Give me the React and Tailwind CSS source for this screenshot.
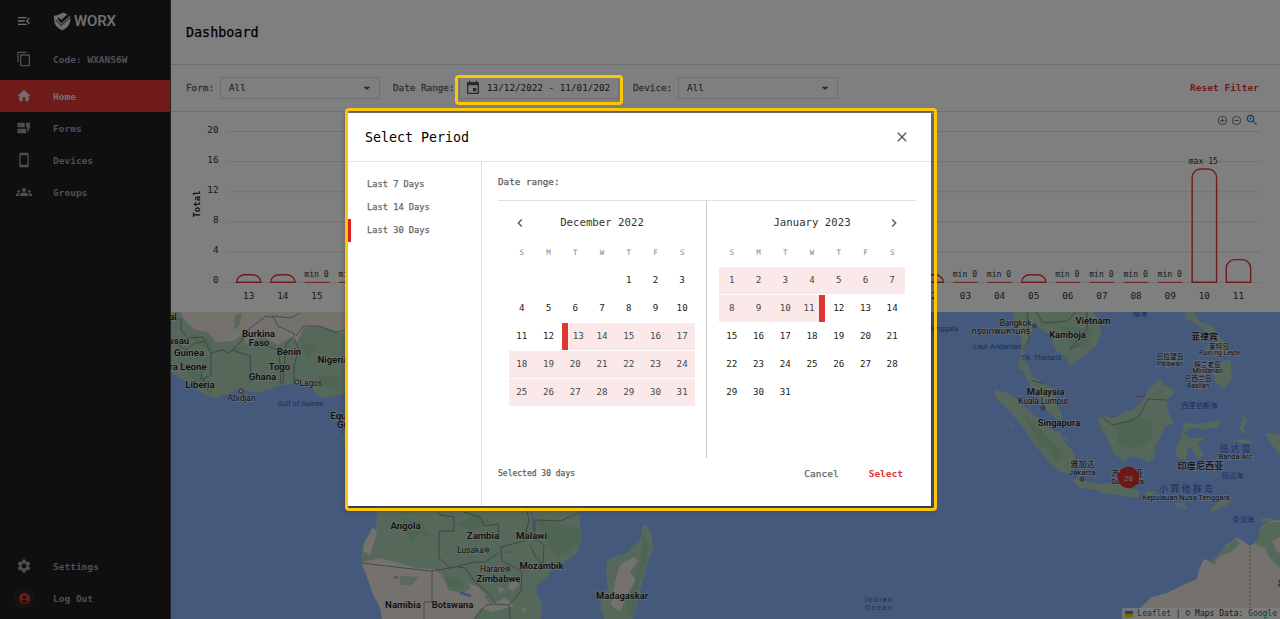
import React from "react";
import {
  MdMenuOpen, MdContentCopy, MdHome, MdDynamicForm, MdStayCurrentPortrait, MdGroups, MdSettings,
  MdAccountCircle, MdEvent, MdArrowDropDown, MdChevronLeft, MdChevronRight, MdClose,
  MdAddCircleOutline, MdRemoveCircleOutline, MdZoomIn,
} from "react-icons/md";

const NAV = [
  { label: "Home", icon: MdHome, active: true },
  { label: "Forms", icon: MdDynamicForm },
  { label: "Devices", icon: MdStayCurrentPortrait },
  { label: "Groups", icon: MdGroups },
];

function NavItem({ label, icon: Icon, active, danger }) {
  return (
    <div className={`flex h-8 shrink-0 items-center text-[9.5px] font-bold ${active ? "bg-[#de3733] text-[#e0e0e0]" : "text-[#9c9ca8]"}`}>
      <span className="flex w-[53px] items-center pl-[13px]">
        <span className={`flex size-[22px] items-center justify-center rounded-full ${danger ? "bg-[#de3733]/10 text-[#de3733]" : ""}`}>
          <Icon className={danger ? "size-[13px]" : "size-4"} />
        </span>
      </span>
      <span className="pt-[2px]">{label}</span>
    </div>
  );
}

function Sidebar() {
  return (
    <aside className="flex w-[171px] shrink-0 flex-col border-r border-[#484848] bg-[#1f1f1f]">
      <div className="flex h-[42px] shrink-0 items-center">
        <MdMenuOpen className="ml-4 size-4 text-[#dddddd]" />
        <svg viewBox="0 0 18 19" className="ml-[21px] h-[19px] w-[18px]">
          <path d="M1 3.8Q6 3.4 10 .6L14.5 2.2L8.2 8L5.6 5.2L4.4 6.4L8.2 11.4L17.3 3.4V8Q17 15 9.2 18.4Q1.4 15 1 8Z" fill="#dddddd" />
          <path d="M2.6 7.6L8 13.6L17.3 5.4" fill="none" stroke="#1f1f1f" strokeWidth="1" />
        </svg>
        <span className="ml-[3px] font-['Roboto',sans-serif] text-[15px] leading-none font-semibold tracking-[-0.15px] text-[#dddddd]">WORX</span>
      </div>
      <div className="mt-px mb-[5px]"><NavItem label="Code: WXANS6W" icon={MdContentCopy} /></div>
      <div className="flex flex-col">{NAV.map((n) => <NavItem key={n.label} {...n} />)}</div>
      <div className="mt-auto mb-[5px] flex flex-col">
        <NavItem label="Settings" icon={MdSettings} />
        <NavItem label="Log Out" icon={MdAccountCircle} danger />
      </div>
    </aside>
  );
}

function SelectBox({ children }) {
  return (
    <div className="flex h-[22px] w-[160px] items-center justify-between border border-[#dedede] pr-[4px] pl-2 text-[#222]">
      <span>{children}</span>
      <MdArrowDropDown className="size-4 text-[#555]" />
    </div>
  );
}

function Filters() {
  return (
    <div className="flex h-[47px] shrink-0 items-center border-b border-[#dddddd] pr-[21px] pl-[15px] text-[9.3px] text-[#2c2c2c]">
      <span className="w-[34px] text-[#666] [-webkit-text-stroke:0.3px_#666]">Form:</span>
      <SelectBox>All</SelectBox>
      <span className="ml-[13px] w-[66px] whitespace-nowrap text-[#666] [-webkit-text-stroke:0.3px_#666]">Date Range:</span>
      <div className="flex h-[22px] w-[160px] items-center gap-[6px] border border-[#dedede] pl-[5px] whitespace-nowrap">
        <MdEvent className="size-4 text-[#555]" />
        13/12/2022 - 11/01/202
      </div>
      <span className="ml-[14px] w-[45px] text-[#666] [-webkit-text-stroke:0.3px_#666]">Device:</span>
      <SelectBox>All</SelectBox>
      <span className="ml-auto text-[9.55px] font-bold text-[#de3733]">Reset Filter</span>
    </div>
  );
}

const DAYS = Array.from({ length: 30 }, (_, i) => String(i < 19 ? 13 + i : i - 18).padStart(2, "0"));
const TOTALS = [1, 1, 0, 0, 1, 0, 0, 0, 0, 0, 0, 0, 0, 0, 0, 0, 0, 0, 0, 0, 1, 0, 0, 1, 0, 0, 0, 0, 15, 3];

function Chart() {
  return (
    <div className="relative h-[200px] shrink-0">
      <svg viewBox="171 112 1109 200" className="block h-[200px] w-[1109px] font-['DejaVu_Sans_Mono',monospace]">
        {[0, 4, 8, 12, 16, 20].map((v) => (
          <g key={v}>
            <line x1="227" x2="1260" y1={282.5 - v * 7.55} y2={282.5 - v * 7.55} stroke="#e4e4e4" />
            <text x="218.5" y={283.3 - v * 7.5} textAnchor="end" fontSize="9.3" fill="#333">{v}</text>
          </g>
        ))}
        <text transform="translate(200 204) rotate(-90)" textAnchor="middle" fontSize="9" fontWeight="700" fill="#222">Total</text>
        {DAYS.map((d, i) => {
          const x = 248.7 + i * 34.13;
          const v = TOTALS[i];
          const h = v * 7.55;
          const r = Math.min(8.5, h);
          return (
            <g key={i}>
              <text x={x} y="299.3" textAnchor="middle" fontSize="9.3" fill="#333">{d}</text>
              {v === 0 ? (
                <>
                  <line x1={x - 12.3} x2={x + 12.3} y1="282.3" y2="282.3" stroke="#de3733" strokeWidth="1" />
                  <text x={x - 0.5} y="277" textAnchor="middle" fontSize="8.1" fill="#333">min 0</text>
                </>
              ) : (
                <path
                  d={`M${x - 12.2} 282.3V${282.3 - h + r}A8.5 ${r} 0 0 1 ${x - 3.7} ${282.3 - h}H${x + 3.7}A8.5 ${r} 0 0 1 ${x + 12.2} ${282.3 - h + r}V282.3Z`}
                  fill="none" stroke="#de3733" strokeWidth="1.4"
                />
              )}
              {v === 15 && <text x={x - 1} y="164" textAnchor="middle" fontSize="8.1" fill="#333">max 15</text>}
            </g>
          );
        })}
      </svg>
      <div className="absolute top-px right-[21px] flex items-center gap-[3px] text-[#6e8192]">
        <MdAddCircleOutline className="size-[11px]" />
        <MdRemoveCircleOutline className="size-[11px]" />
        <MdZoomIn className="size-[14px] text-[#0f8bf0]" />
      </div>
    </div>
  );
}

const LABELS = [
  ["ssau", 179, 343.5, 9.6, 600], ["al", 173, 320, 9.6, 600], ["Guinea", 189, 356, 9.6, 600], ["ra Leone", 188, 370, 9.6, 600], ["Liberia", 200, 387.5, 9.6, 600],
  ["Burkina", 258.5, 336.5, 9.6, 600], ["Faso", 259, 346, 9.6, 600], ["Benin", 289, 355, 9.6, 600], ["Togo", 279.5, 369.5, 9.6, 600],
  ["Ghana", 262.5, 379.5, 9.6, 600], ["Nigeria", 333, 363, 9.6, 600], ["Lagos", 311, 386, 8.4, 400], ["Abidjan", 241.5, 401, 8.4, 400],
  ["Equatorial", 352, 418.5, 9.6, 600], ["Guinea", 352, 428, 9.6, 600],
  ["Angola", 405.5, 529, 9.6, 600], ["Zambia", 483, 538.5, 9.6, 600], ["Malawi", 531.5, 538.5, 9.6, 600], ["Lusaka", 470.5, 552.5, 8.4, 400],
  ["Mozambik", 541.5, 568.5, 9.4, 600], ["Harare", 492.5, 572, 8.4, 400], ["Zimbabwe", 498.5, 582, 9.4, 600], ["Namibia", 403, 607.5, 9.6, 600],
  ["Botswana", 452.5, 608, 9.4, 600], ["Madagaskar", 622, 599, 9.4, 600],
  ["Bangkok", 1015.5, 325.5, 8.2, 400], ["กรุงเทพมหานคร", 1001, 333.5, 9, 400], ["Vietnam", 1093, 324, 9.4, 600], ["Kamboja", 1067.5, 338, 9.2, 600],
  ["Malaysia", 1045.5, 395, 9.4, 600], ["Kuala Lumpur", 1043.5, 404, 8.2, 400], ["Singapura", 1059, 425.5, 9.4, 600],
  ["菲律宾", 1204.5, 340, 9, 500], ["莱特岛", 1219, 348.5, 6.6, 400], ["Pulo ng Leyte", 1219.5, 355, 6.8, 400],
  ["巴拉望岛", 1170, 359, 6.8, 400], ["Palawan", 1170, 366, 6.8, 400], ["棉兰老岛", 1207.5, 366.5, 6.6, 400], ["Mindanao", 1207.5, 373, 6.8, 400],
  ["巴西兰岛", 1198, 381, 6.8, 400], ["Basilan", 1198, 388, 6.8, 400], ["雅加达", 1082.5, 467, 8, 400], ["Jakarta", 1082, 474.5, 8, 400],
  ["苏腊巴亚", 1127.5, 475.5, 8, 400], ["Surabaya", 1127.5, 483.5, 8, 400], ["印度尼西亚", 1200.5, 468.5, 9.2, 500],
  ["Banda Arc", 1235.5, 459, 7.4, 400], ["Kepulauan Nusa Tenggara", 1186, 500, 7.5, 400],
  ["北", 1281, 586, 8, 400],
];
const SEA = [
  ["Gulf of Guinea", 300.5, 405.5, 7.2], ["Benggala", 943, 331, 7.2], ["Laut Andaman", 997.5, 348.5, 7.4], ["Tlk. Thailand", 1041, 360, 7.2],
  ["南海", 1140, 316, 7.2], ["西里伯斯海", 1199.5, 407.5, 7.2], ["班 达 弧", 1235, 452, 8.6], ["班达海", 1232.5, 478, 7.2],
  ["小 巽 他 群 岛", 1186, 491.5, 9], ["帝汶海", 1243, 521.5, 7.2],
];

function WorldMap() {
  return (
    <div className="relative h-[307px] shrink-0">
      <svg viewBox="171 312 1109 307" className="block h-[307px] w-[1109px] font-['Roboto','Noto_Sans_CJK_SC','Noto_Sans_Thai',sans-serif]">
        <rect x="171" y="312" width="1109" height="307" fill="#8bb3f8" />
        <g fill="#abd0b5">
          <path d="M171 312H560L590 500L579 512L581 541L577 553L570 559L556 565L547 577L537 585L536 592L542 601L541 619H382L380 608L372 592L368 574L361 563L362 548L370 536L376 528L377 511L370 490L356 463L342 440L346 430L345 393L330 397L320 398L315 392L311 387L305 383L297 384L281 385L270 389L255 393L243 389L235 391L215 398L200 392L190 384L180 378L171 372Z" />
          <path d="M646 524L651 534L652 544L654 552L650 555L645 572L638 600L633 619H604L600 606L602 598L608 588L606 573L607 561L615 556L627 553L634 545L641 538L642 527Z" />
          <path d="M1013 312H1092L1099 319L1101 333L1097 345L1083 357L1070 366L1067 358L1056 350L1050 335L1040 328L1034 326L1027 343L1023 358L1028 365L1032 376L1042 383L1052 388L1056 400L1063 418L1057 420L1045 409L1037 395L1030 386L1024 372L1018 368L1021 355L1021 338L1015 322Z" />
          <path d="M994 389L1001 391L1009 393L1022 404L1030 412L1042 421L1050 428L1061 434L1066 444L1074 452L1075 462L1069 474L1058 471L1045 457L1034 444L1024 429L1010 411L997 399Z" />
          <path d="M1072 480L1080 477L1088 482L1097 484L1105 483L1118 484L1128 487L1139 491L1138 498L1123 496L1105 493L1091 489L1080 488Z" />
          <path d="M1098 419L1103 416L1115 418L1125 411L1133 410L1144 399L1149 388L1160 379L1164 385L1172 389L1175 393L1166 400L1168 411L1173 423L1164 427L1161 438L1155 446L1154 459L1144 460L1133 456L1123 461L1113 453L1109 440L1101 429Z" />
          <path d="M1184 423L1198 424L1213 422L1221 419L1218 427L1203 429L1190 427L1184 434L1191 439L1207 437L1198 443L1203 455L1198 459L1189 445L1186 459L1178 459L1175 450L1181 438Z" />
          <path d="M1185 312H1194L1200 322L1213 326L1216 333L1206 332L1195 323L1185 318ZM1198 334L1204 335L1202 345ZM1216 333L1226 343L1230 355L1223 356L1217 345ZM1208 342L1212 358L1206 352ZM1212 373L1222 361L1230 360L1232 378L1224 389L1216 382ZM1165 371L1178 349L1172 364Z" />
          <path d="M1243 414L1248 421L1243 427L1247 434L1240 430ZM1264 433L1277 434L1280 436V455L1272 445ZM1235 440L1247 439L1254 444L1241 443ZM1174 503L1184 503L1188 509L1178 508ZM1210 509L1218 502L1234 496L1227 505L1213 512ZM1145 492L1154 491L1155 495L1146 495ZM1260 519L1269 518L1278 521L1262 522ZM1143 458L1153 458L1147 463ZM1064 436L1069 438L1067 442ZM1008 422L1014 427L1012 428Z" />
        </g>
        <g fill="#ebe4dc">
          <path d="M180 312H360V330L341 333L318 326L303 328L297 343L291 337L278 345L262 336L249 342L236 349L231 341L216 342L208 332L195 330L186 322Z" />
          <path d="M361 563L379 558L399 563L415 568L434 569L445 577L448 590L463 593L476 585L490 604L505 598L514 606L492 612L481 608L474 619H382L380 608L372 592L366 574Z" />
          <path d="M373 527L377 533L373 545L370 555L363 551L364 543Z" />
          <path d="M498 586L505 590L499 593ZM468 583L478 587L487 596L473 591ZM514 579L519 585L513 591L508 587ZM523 606L527 610L523 613Z" />
          <path d="M620 565L633 557L638 560L630 572L636 580L627 595L620 612L611 605L615 582ZM1280 520L1270 521L1262 526L1257 542L1250 546L1243 541L1237 538L1226 545L1220 555L1212 562L1204 559L1199 570L1197 579L1181 586L1167 593L1152 597L1139 609L1136 619H1280Z" />
        </g>
        <path d="M1209 562L1217 556L1223 548L1236 539L1240 543L1233 551L1219 557L1214 565ZM1256 544L1260 529L1268 522L1280 522V537L1272 541L1276 550L1280 554V568L1269 557L1265 548Z" fill="#abd0b5" />
        <g fill="#94c6a1" opacity="0.6">
          <path d="M235 315L242 314L240 324L234 331ZM230 343L246 332L245 348L235 350ZM190 335L208 338L214 352L198 344ZM176 360L194 368L209 383L214 396L199 386ZM302 344L318 346L306 358ZM317 375L338 377L339 391L323 386ZM402 517L420 521L432 537L417 534L413 545L407 534ZM455 525L477 514L492 523L473 530ZM534 519L579 528L580 544L557 557L548 544ZM400 576L419 577L411 585L400 585ZM440 575L460 579L465 588L449 586ZM644 535L649 548L638 590L633 619L625 611L635 580L641 558ZM1117 425L1135 417L1152 420L1151 439L1136 450L1117 443ZM1152 395L1162 388L1160 397ZM1020 410L1041 430L1064 453L1059 462L1038 442ZM1060 326L1095 330L1085 348L1070 345Z" />
        </g>
        <g fill="none" stroke="#747e79" strokeWidth="0.8">
          <path d="M171 318L181 319L181 330L187 338L203 337L211 353V375L203 379L208 390M211 353L222 350L229 353L238 345L249 329L266 316L274 318L278 326L295 334L286 345L283 384M232 350L250 356L251 382M266 346L279 350L281 384M294 338L299 350L294 365V384M296 336L303 326L319 326L335 332L348 330M272 316L291 318L300 313" />
          <path d="M171 340L186 350L193 344L205 341M192 365L202 369L201 380M440 507V515L454 517V531H439V558L450 568L430 571L361 563M432 571V602H424V619M458 567L465 568L476 583L487 592L496 604L509 605L521 591L522 571L502 561L501 547L524 541L529 520L526 507M509 605L510 619M496 604L486 605L474 619M450 568L460 566L474 562L485 562L500 552M464 512L480 517L484 526L498 524L499 539L490 535M530 545L535 556L543 565L544 545L534 538L535 520L560 521L579 513" />
          <path d="M1027 312L1029 340L1023 350M1036 312L1043 323L1068 321L1075 312M1087 312V329L1070 349L1079 345M1031 380L1044 384M1102 417L1112 425L1130 421L1140 415L1148 399L1166 400M1136 397L1145 396" />
          <path d="M1250 547V619" strokeDasharray="2 2" />
        </g>
        <path d="M531 507L536 530L533 530ZM484 562L491 558L489 561ZM392 577L398 576L397 579ZM505 552L517 551L505 553ZM460 591L472 595L470 597L460 594Z" fill="#7ba5ee" />
        {SEA.map(([t, x, y, s]) => (
          <text key={t} x={x} y={y} fontSize={s} textAnchor="middle" fill="#2c5fb3">{t}</text>
        ))}
        {LABELS.map(([t, x, y, s, w], i) => (
          <text key={i} x={x} y={y} fontSize={s} fontWeight={w} textAnchor="middle" fill="#222222" stroke="#f4f4f4" strokeOpacity="0.5" strokeWidth="1.6" paintOrder="stroke">{t}</text>
        ))}
        <g fill="#e8e8e8" stroke="#333" strokeWidth="0.8">
          {[[241, 391], [297, 382], [487, 550], [508, 569], [1034.5, 326], [1043, 408], [1082, 479]].map(([x, y]) => (
            <g key={x}><circle cx={x} cy={y} r="2" />{x > 300 && <circle cx={x} cy={y} r="0.6" />}</g>
          ))}
        </g>
        <text x="879" y="601.5" fontSize="8" textAnchor="middle" fill="#2c5fb3" letterSpacing="1.1">Indian</text>
        <text x="879" y="610" fontSize="8" textAnchor="middle" fill="#2c5fb3" letterSpacing="1.1">Ocean</text>
        <circle cx="1128.5" cy="477.5" r="10.7" fill="#d9302c" />
        <text x="1128.5" y="480.5" fontSize="8" textAnchor="middle" fill="#f0d8d8" className="font-['Liberation_Sans',sans-serif]">28</text>
      </svg>
      <div className="absolute right-0 bottom-0 flex h-[11px] items-center gap-[4px] bg-white/75 pr-[3px] pl-[3px] leading-none whitespace-pre text-[#333]">
        <span className="flex h-[6px] w-2 flex-col"><span className="h-[3px] bg-[#4c7be1]" /><span className="h-[3px] bg-[#ffd500]" /></span>
        <span className="text-[8px]"><span className="text-[#0078a8]">Leaflet</span> | © Maps Data: <span className="text-[#0078a8]">Google</span></span>
      </div>
    </div>
  );
}

function Calendar({ title, offset, count, rangeFrom, rangeTo, start, end, prev, next }) {
  const cells = [...Array(offset).fill(null), ...Array.from({ length: count }, (_, i) => i + 1)];
  return (
    <div className={`shrink-0 ${next ? "w-[209px] pr-[10.5px] pl-[11.5px]" : "w-[208px] pr-[10.5px] pl-[10.5px]"}`}>
      <div className="flex h-[44px] items-center justify-between text-[10.7px] text-[#333]">
        <span className="flex w-[23px] justify-center">{prev && <MdChevronLeft className="size-4 text-[#555]" />}</span>
        <span className="whitespace-nowrap">{title}</span>
        <span className="flex w-[23px] justify-center">{next && <MdChevronRight className="size-4 text-[#555]" />}</span>
      </div>
      <div className="grid h-[15px] grid-cols-7 items-center text-center text-[7.5px] text-[#888]">
        {["S", "M", "T", "W", "T", "F", "S"].map((d, i) => <span key={i}>{d}</span>)}
      </div>
      <div className="mt-[7px] grid grid-cols-7 gap-y-px text-[9.2px] text-[#222]">
        {cells.map((d, i) => {
          const inRange = d !== null && d >= rangeFrom && d <= rangeTo;
          return (
            <div key={i} className={`flex h-[27px] items-center ${inRange ? "bg-[#fbe9e9] text-[#484848]" : ""}`}>
              {d !== null && d === start && <span className="h-full w-[6px] bg-[#de3733]" />}
              <span className="flex-1 pb-[2px] text-center">{d}</span>
              {d !== null && d === end && <span className="h-full w-[6px] bg-[#de3733]" />}
            </div>
          );
        })}
      </div>
    </div>
  );
}

function PeriodDialog() {
  return (
    <div className="absolute top-[113px] left-[348px] flex h-[393px] w-[583px] flex-col bg-white shadow-[0_2px_6px_2px_rgba(0,0,0,0.35)]">
      <div className="flex h-[49px] shrink-0 items-center justify-between border-b border-[#e4e4e4] pr-[21px] pl-[17px]">
        <h2 className="pt-[2px] text-[13.3px] text-black">Select Period</h2>
        <MdClose className="size-[16px] text-[#555]" />
      </div>
      <div className="flex min-h-0 flex-1">
        <div className="flex w-[134px] shrink-0 flex-col border-r border-[#e0e0e0] pt-[11px] text-[8.7px] text-[#666] [-webkit-text-stroke:0.25px_#666]">
          <div className="flex h-[23px] items-center pl-[19px]">Last 7 Days</div>
          <div className="flex h-[23px] items-center pt-px pl-[19px]">Last 14 Days</div>
          <div className="flex h-[23px] items-center border-l-[3px] border-[#e02020] pt-px pl-4">Last 30 Days</div>
        </div>
        <div className="flex flex-1 flex-col pl-4">
          <div className="flex h-[38px] shrink-0 items-center pt-[2px] text-[9.3px] text-[#606060] [-webkit-text-stroke:0.25px_#606060]">Date range:</div>
          <div className="flex h-[258px] w-[418px] shrink-0 border-t border-[#e0e0e0]">
            <Calendar title="December 2022" offset={4} count={31} rangeFrom={13} rangeTo={31} start={13} prev />
            <div className="w-px shrink-0 bg-[#cccccc]" />
            <Calendar title="January 2023" offset={0} count={31} rangeFrom={1} rangeTo={11} end={11} next />
          </div>
          <div className="flex h-[32px] items-center pr-[28px] text-[9.5px]">
            <span className="text-[8px] text-[#606060] [-webkit-text-stroke:0.25px_#606060]">Selected 30 days</span>
            <span className="ml-auto text-[#666] [-webkit-text-stroke:0.25px_#666]">Cancel</span>
            <span className="ml-[30px] font-bold text-[#de3733]">Select</span>
          </div>
        </div>
      </div>
    </div>
  );
}

export default function App() {
  return (
    <div className="relative flex h-[619px] w-[1280px] overflow-hidden bg-white font-['DejaVu_Sans_Mono',monospace]">
      <Sidebar />
      <main className="flex w-[1109px] shrink-0 flex-col">
        <header className="flex h-[65px] shrink-0 items-center border-b border-[#dddddd] pl-[15px]">
          <h1 className="pt-[2px] text-[13.4px] font-normal text-black [-webkit-text-stroke:0.25px_black]">Dashboard</h1>
        </header>
        <Filters />
        <Chart />
        <WorldMap />
      </main>
      <div className="absolute inset-0 bg-black/50" />
      <PeriodDialog />
      <div className="absolute top-[75px] left-[455px] h-[30px] w-[168px] rounded-[4px] border-[3px] border-[#fcc50a]" />
      <div className="absolute top-[108px] left-[345px] h-[403px] w-[592px] rounded-[4px] border-[3px] border-[#fcc50a]" />
    </div>
  );
}
